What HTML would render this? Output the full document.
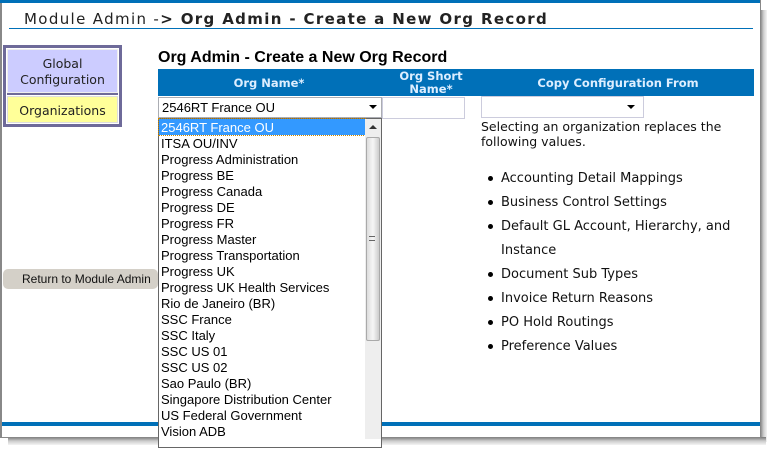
<!DOCTYPE html>
<html><head><style>
*{margin:0;padding:0;box-sizing:border-box}
body{width:775px;height:452px;background:#fff;position:relative;overflow:hidden;font-family:"DejaVu Sans",Verdana,sans-serif}
.a{position:absolute}
.v{font-family:"DejaVu Sans",sans-serif}
.ar{font-family:"Liberation Sans",Arial,sans-serif}
.li{position:absolute;left:161px;font-family:"Liberation Sans",Arial,sans-serif;font-size:13px;line-height:16px;color:#000;white-space:nowrap;margin-top:1px}
.bl{position:absolute;left:488px;font-size:13px;color:#111;white-space:nowrap;margin-top:2px}
.bl:before{content:"";position:absolute;left:0;top:5px;width:5px;height:5px;border-radius:50%;background:#000}
.bl span{position:absolute;left:13px;top:0}
</style></head><body>
<div class="a" style="left:760px;top:10px;width:7px;height:432px;background:linear-gradient(90deg,#777,#ccc,#f4f4f4)"></div>
<div class="a" style="left:8px;top:437px;width:758px;height:8px;background:linear-gradient(180deg,#777,#ccc,#f4f4f4)"></div>
<div class="a" style="left:0;top:0;width:761px;height:438px;border-left:2px solid #888;border-bottom:1px solid #888;border-right:1px solid #888;background:#fff"></div>
<div class="a" style="left:0;top:0;width:760px;height:3px;background:#0070b8"></div>
<div class="a v" style="left:24px;top:10px;font-size:15px;letter-spacing:1.35px;color:#222;white-space:nowrap">Module Admin -<b>&gt; Org Admin - Create a New Org Record</b></div>
<div class="a" style="left:9px;top:28px;width:744px;height:1px;background:#0070b8"></div>
<div class="a" style="left:2px;top:422px;width:758px;height:4px;background:#0070b8"></div>
<div class="a" style="left:3px;top:45px;width:119px;height:82px;border:3px solid #6e6a99;background:#fff"></div>
<div class="a v" style="left:7px;top:49px;width:111px;height:44px;background:#ccccff;border:1px solid #eee;font-size:12.5px;color:#222;text-align:center;line-height:16px;padding-top:6px">Global<br>Configuration</div>
<div class="a" style="left:7px;top:93px;width:111px;height:2px;background:#6e6a99"></div>
<div class="a v" style="left:7px;top:96px;width:111px;height:27px;background:#ffff99;border:1px solid #ddd;font-size:12.5px;color:#222;text-align:center;line-height:27px">Organizations</div>
<div class="a ar" style="left:3px;top:269px;width:155px;height:20px;background:#d4d0c8;border-radius:5px;font-size:12px;line-height:21px;padding-left:19px;color:#111">Return to Module Admin</div>
<div class="a ar" style="left:158px;top:49px;font-size:16px;font-weight:bold;color:#000">Org Admin - Create a New Org Record</div>
<div class="a" style="left:158px;top:69px;width:596px;height:27px;background:#0070b8"></div>
<div class="a v" style="left:158px;top:76px;width:222px;text-align:center;color:#ddeeff;font-size:11.5px;font-weight:bold">Org Name*</div>
<div class="a v" style="left:380px;top:70px;width:102px;text-align:center;color:#ddeeff;font-size:11.5px;font-weight:bold;line-height:13px">Org Short<br>Name*</div>
<div class="a v" style="left:482px;top:76px;width:272px;text-align:center;color:#ddeeff;font-size:11.5px;font-weight:bold">Copy Configuration From</div>
<div class="a ar" style="left:158px;top:97px;width:224px;height:21px;border:1px solid #abadb3;font-size:13px;line-height:20px;padding-left:3px">2546RT France OU</div>
<div class="a" style="left:369px;top:105px;border-left:4px solid transparent;border-right:4px solid transparent;border-top:4px solid #000"></div>
<div class="a" style="left:382px;top:97px;width:83px;height:22px;border:1px solid #ccd;"></div>
<div class="a" style="left:481px;top:96px;width:163px;height:22px;border:1px solid #ccd;"></div>
<div class="a" style="left:627px;top:105px;border-left:4px solid transparent;border-right:4px solid transparent;border-top:4px solid #000"></div>
<div class="a v" style="left:481px;top:119px;font-size:12.5px;line-height:15px;color:#111">Selecting an organization replaces the<br>following values.</div>
<div class="a" style="left:158px;top:118px;width:224px;height:330px;border:1px solid #666;background:#fff"></div>
<div class="a" style="left:159px;top:119px;width:206px;height:16px;background:#3399ff;outline:1px dotted #c80"></div>
<div class="a" style="left:365px;top:119px;width:16px;height:320px;background:#eee"></div>
<div class="a" style="left:366px;top:137px;width:14px;height:204px;background:linear-gradient(90deg,#ddd,#f6f6f6,#ccc);border:1px solid #aaa;border-radius:2px"></div>
<div class="a" style="left:369px;top:125px;border-left:4px solid transparent;border-right:4px solid transparent;border-bottom:4px solid #333"></div>
<div class="a" style="left:369px;top:236px;width:6px;height:5px;border-top:1px solid #666;border-bottom:1px solid #666"></div>
<div class="li" style="top:119px;color:#fff">2546RT France OU</div>
<div class="li" style="top:135px">ITSA OU/INV</div>
<div class="li" style="top:151px">Progress Administration</div>
<div class="li" style="top:167px">Progress BE</div>
<div class="li" style="top:183px">Progress Canada</div>
<div class="li" style="top:199px">Progress DE</div>
<div class="li" style="top:215px">Progress FR</div>
<div class="li" style="top:231px">Progress Master</div>
<div class="li" style="top:247px">Progress Transportation</div>
<div class="li" style="top:263px">Progress UK</div>
<div class="li" style="top:279px">Progress UK Health Services</div>
<div class="li" style="top:295px">Rio de Janeiro (BR)</div>
<div class="li" style="top:311px">SSC France</div>
<div class="li" style="top:327px">SSC Italy</div>
<div class="li" style="top:343px">SSC US 01</div>
<div class="li" style="top:359px">SSC US 02</div>
<div class="li" style="top:375px">Sao Paulo (BR)</div>
<div class="li" style="top:391px">Singapore Distribution Center</div>
<div class="li" style="top:407px">US Federal Government</div>
<div class="li" style="top:423px">Vision ADB</div>
<div class="bl" style="top:169px"><span>Accounting Detail Mappings</span></div>
<div class="bl" style="top:193px"><span>Business Control Settings</span></div>
<div class="bl" style="top:217px"><span>Default GL Account, Hierarchy, and</span></div>
<div class="a" style="left:501px;top:243px;font-size:13px;color:#111">Instance</div>
<div class="bl" style="top:265px"><span>Document Sub Types</span></div>
<div class="bl" style="top:289px"><span>Invoice Return Reasons</span></div>
<div class="bl" style="top:313px"><span>PO Hold Routings</span></div>
<div class="bl" style="top:337px"><span>Preference Values</span></div>
</body></html>
